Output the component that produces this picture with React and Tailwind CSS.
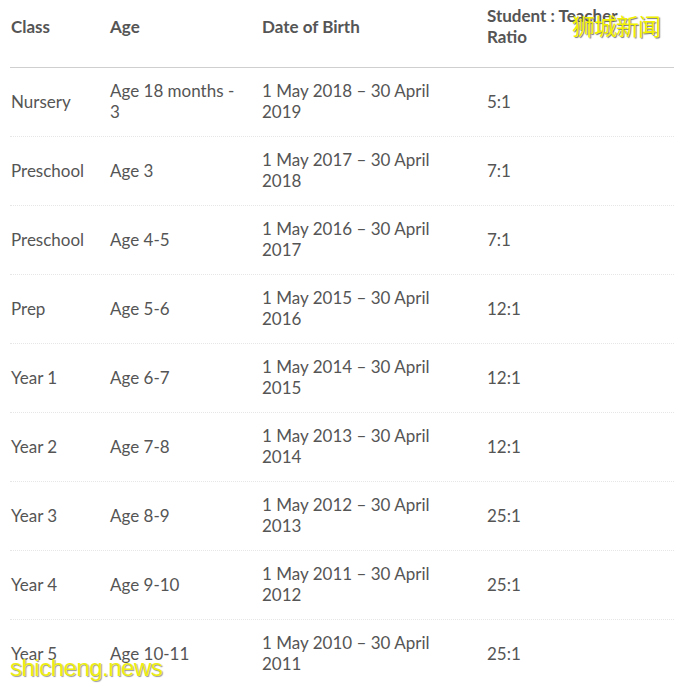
const rows = [
  ["Nursery", "Age 18 months - 3", "1 May 2018 – 30 April 2019", "5:1"],
  ["Preschool", "Age 3", "1 May 2017 – 30 April 2018", "7:1"],
  ["Preschool", "Age 4-5", "1 May 2016 – 30 April 2017", "7:1"],
  ["Prep", "Age 5-6", "1 May 2015 – 30 April 2016", "12:1"],
  ["Year 1", "Age 6-7", "1 May 2014 – 30 April 2015", "12:1"],
  ["Year 2", "Age 7-8", "1 May 2013 – 30 April 2014", "12:1"],
  ["Year 3", "Age 8-9", "1 May 2012 – 30 April 2013", "25:1"],
  ["Year 4", "Age 9-10", "1 May 2011 – 30 April 2012", "25:1"],
  ["Year 5", "Age 10-11", "1 May 2010 – 30 April 2011", "25:1"],
];

const cols = "grid grid-cols-[100px_152px_225px_1fr]";

export default function App() {
  return (
    <div className="relative w-[674px] h-[688px] overflow-hidden bg-white text-[#555] font-['Lato','Liberation_Sans',sans-serif] text-[17px] leading-[21px]">
      <div className="pl-[10px]">
        <div className={`${cols} h-[68px] pt-[5px] border-b border-[#cfcfcf] font-bold text-[#555]`}>
          <div className="h-[42px] flex items-center pl-[1px]">Class</div>
          <div className="h-[42px] flex items-center">Age</div>
          <div className="h-[42px] flex items-center">Date of Birth</div>
          <div className="h-[42px] flex items-center pr-[40px]">Student : Teacher Ratio</div>
        </div>
        {rows.map((r, i) => (
          <div key={i} className={`${cols} h-[69px] items-center pb-[2px] border-b border-dotted border-[#e6e6e6]`}>
            <div className="pl-[1px] pr-2">{r[0]}</div>
            <div className="pr-[20px]">{r[1]}</div>
            <div className="pr-[50px]">{r[2]}</div>
            <div>{r[3]}</div>
          </div>
        ))}
      </div>
      <div className="absolute left-[572px] top-[11px] text-[23px] leading-[28px] text-[#f2f200] font-['Noto_Sans_CJK_SC',sans-serif] [text-shadow:1px_1px_1px_#777] tracking-[-1px]">
        狮城新闻
      </div>
      <div className="absolute left-[10px] top-[653px] text-[24px] leading-[30px] text-[#eeee10] font-['Liberation_Sans',sans-serif] [text-shadow:1px_1px_1px_#999] tracking-[-0.5px]">
        shicheng.news
      </div>
    </div>
  );
}
